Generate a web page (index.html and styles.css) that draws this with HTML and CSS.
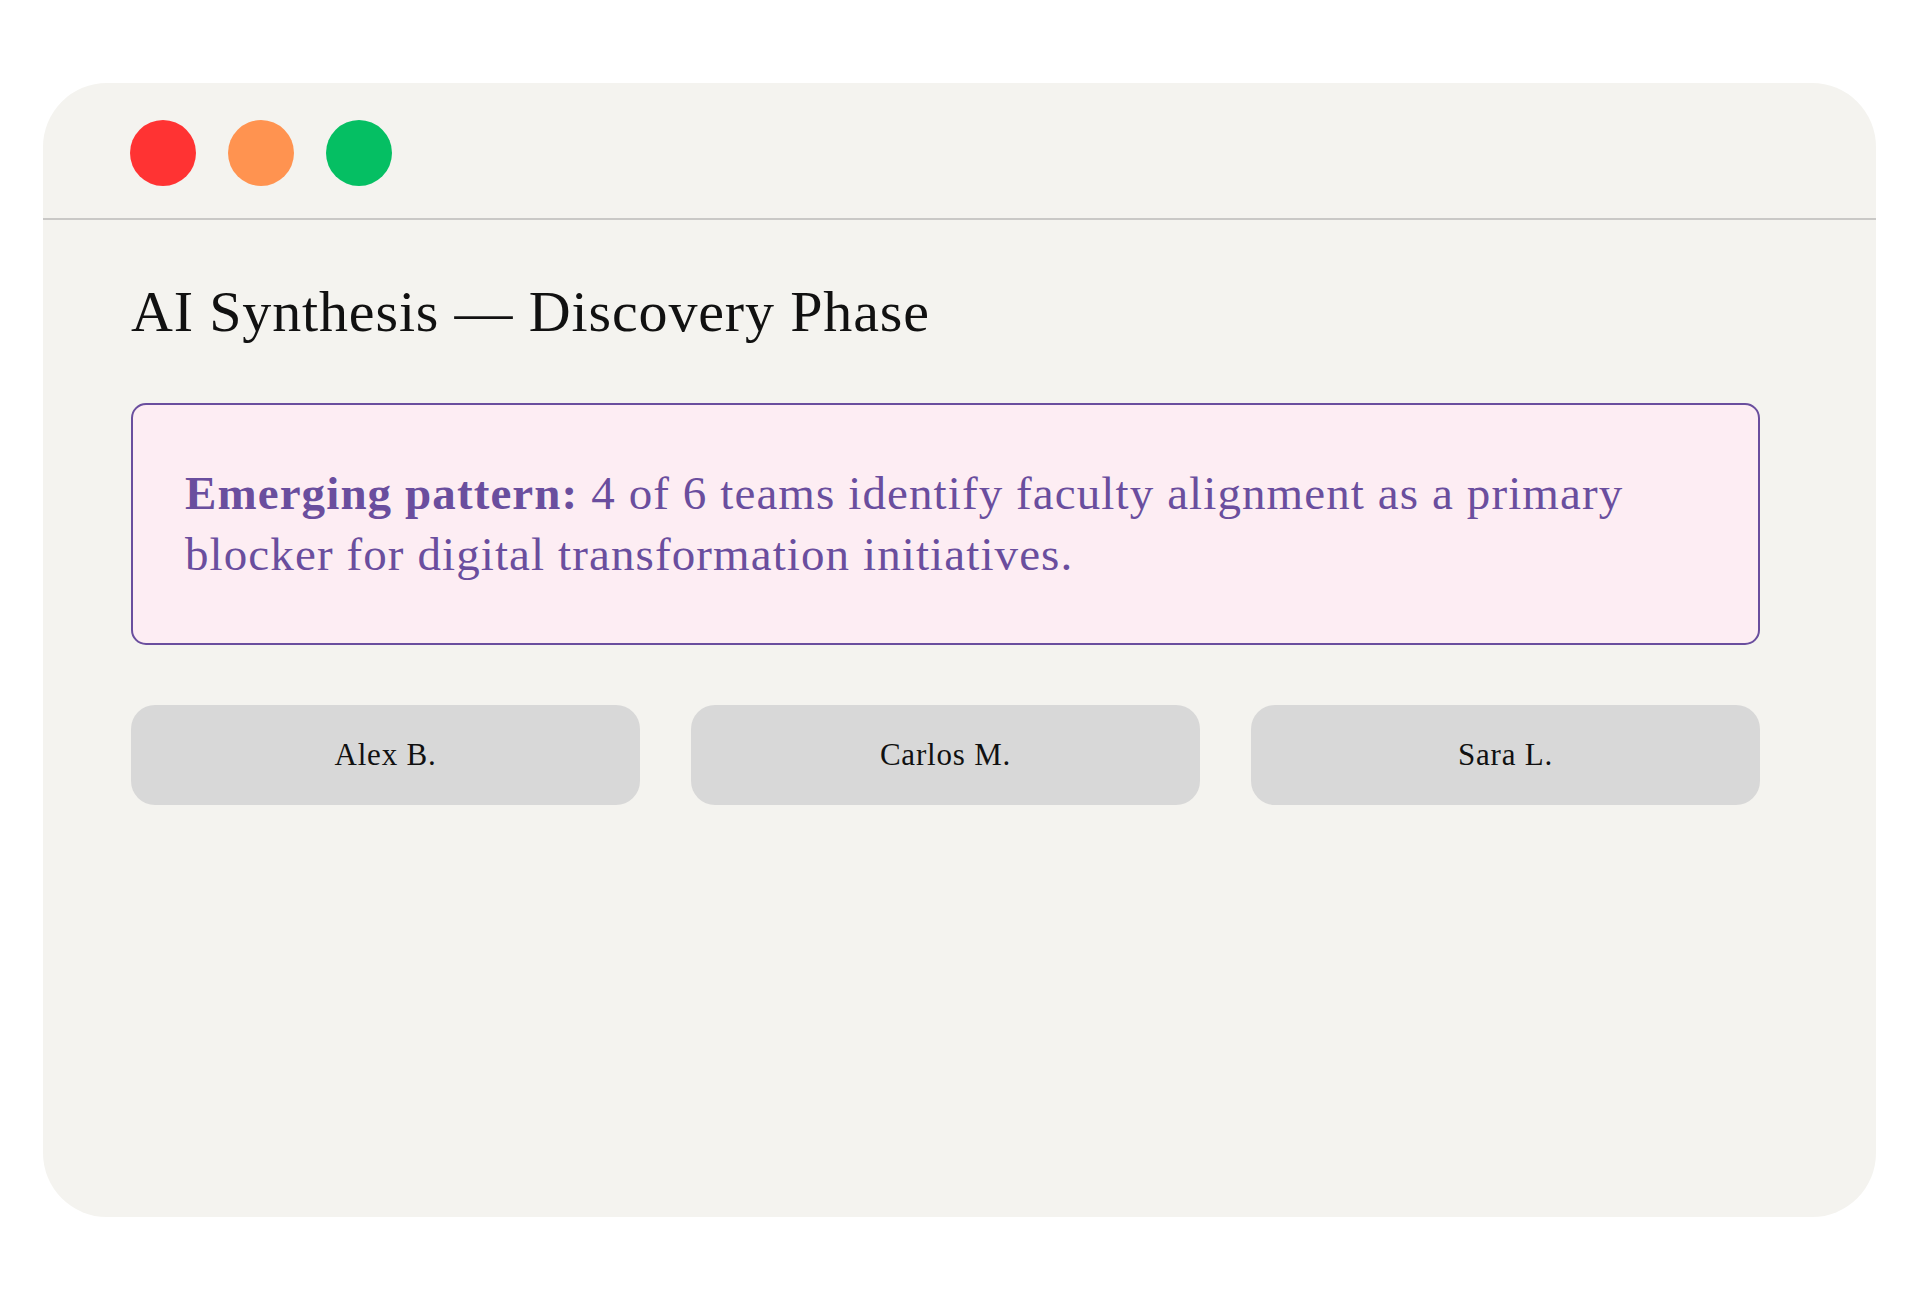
FILE: index.html
```html
<!DOCTYPE html>
<html lang="en">
<head>
<meta charset="utf-8">
<title>AI Synthesis — Discovery Phase</title>
<link rel="stylesheet" href="styles.css">
</head>
<body>
<div class="window">
  <div class="titlebar">
    <span class="dot dot-red"></span>
    <span class="dot dot-orange"></span>
    <span class="dot dot-green"></span>
  </div>
  <div class="content">
    <h1 class="title">AI Synthesis — Discovery Phase</h1>
    <div class="callout">
      <p><strong>Emerging pattern:</strong> 4 of 6 teams identify faculty alignment as a primary blocker for digital transformation initiatives.</p>
    </div>
    <div class="people">
      <div class="person">Alex B.</div>
      <div class="person">Carlos M.</div>
      <div class="person">Sara L.</div>
    </div>
  </div>
</div>
</body>
</html>
```
FILE: styles.css
```css
html, body {
  margin: 0;
  padding: 0;
  background: #ffffff;
}
body {
  font-family: "Liberation Serif", "DejaVu Serif", serif;
  color: #111111;
}
.window {
  margin: 83px 0 0 43px;
  width: 1833px;
  height: 1134px;
  background: #f4f3ef;
  border-radius: 64px;
  overflow: hidden;
  box-sizing: border-box;
}
.titlebar {
  height: 137px;
  box-sizing: border-box;
  border-bottom: 2px solid #c9c8c6;
  display: flex;
  align-items: center;
  gap: 32px;
  padding: 4px 0 0 87px;
}
.dot {
  width: 66px;
  height: 66px;
  border-radius: 50%;
  display: block;
}
.dot-red { background: #ff3333; }
.dot-orange { background: #ff9350; }
.dot-green { background: #05bf63; }
.content {
  padding: 56px 116px 0 88px;
}
.title {
  margin: 0;
  font-weight: 400;
  font-size: 58px;
  line-height: 72px;
  letter-spacing: 0.85px;
  color: #111111;
}
.callout {
  margin-top: 55px;
  border: 2px solid #6a4e9e;
  border-radius: 15px;
  background: #fdedf3;
  padding: 58px 52px 58px;
}
.callout p {
  margin: 0;
  font-size: 47px;
  line-height: 61px;
  letter-spacing: 1.1px;
  color: #6a4e9e;
}
.callout strong {
  font-weight: 700;
}
.people {
  margin-top: 60px;
  display: grid;
  grid-template-columns: repeat(3, 1fr);
  gap: 51px;
}
.person {
  height: 100px;
  border-radius: 24px;
  background: #d8d8d8;
  display: flex;
  align-items: center;
  justify-content: center;
  font-size: 31px;
  letter-spacing: 0.8px;
  color: #111111;
}
```
